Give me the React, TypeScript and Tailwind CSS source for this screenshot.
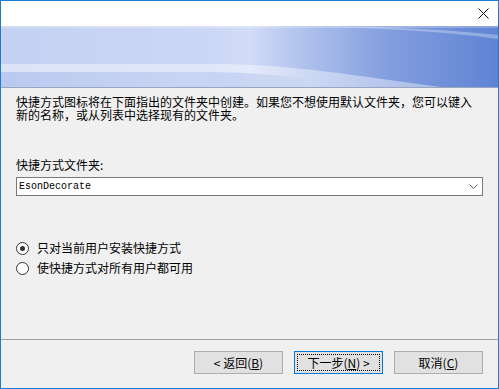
import React from 'react';

function Banner() {
  return (
    <svg width="497" height="61" viewBox="0 0 497 61" className="block">
      <defs>
        <linearGradient id="bn" x1="0" y1="0" x2="1" y2="0">
          <stop offset="0" stopColor="#c4d1f2" />
          <stop offset="0.42" stopColor="#cbd7f5" />
          <stop offset="0.5" stopColor="#d2dcf6" />
          <stop offset="0.6" stopColor="#b2c3ed" />
          <stop offset="0.78" stopColor="#839ede" />
          <stop offset="1" stopColor="#5f83d4" />
        </linearGradient>
        <linearGradient id="low" x1="0" y1="0" x2="1" y2="0">
          <stop offset="0" stopColor="#b6c6ee" />
          <stop offset="0.5" stopColor="#c6d3f3" />
          <stop offset="0.8" stopColor="#98afe6" stopOpacity="0" />
        </linearGradient>
      </defs>
      <rect width="497" height="61" fill="url(#bn)" />
      <rect width="497" height="2" fill="#ffffff" opacity="0.25" />
      <path d="M330 1 C400 3 455 7 497 13 L497 9 C450 4 400 1 330 1 Z" fill="#ffffff" opacity="0.3" />
      <path d="M0 38 L215 38 C290 38 355 50 440 61 L0 61 Z" fill="#ffffff" opacity="0.4" />
      <path d="M0 46 L200 46 C270 46 330 55 390 61 L0 61 Z" fill="url(#low)" opacity="0.9" />
    </svg>
  );
}

function Radio({ checked, label }: { checked?: boolean; label: string }) {
  return (
    <div className="flex items-center h-[16px] gap-[8px]">
      <div className="w-[13px] h-[13px] rounded-full border border-[#333333] bg-white flex items-center justify-center">
        {checked && <div className="w-[5px] h-[5px] rounded-full bg-[#333333]" />}
      </div>
      <span className="leading-[12px]">{label}</span>
    </div>
  );
}

function Btn({ children, primary }: { children: React.ReactNode; primary?: boolean }) {
  return (
    <div
      className={
        'w-[89px] h-[23px] bg-[#e1e1e1] border flex items-center justify-center ' +
        (primary ? 'border-[#0078d7]' : 'border-[#adadad]')
      }
    >
      {primary ? (
        <div className="w-[83px] h-[17px] border border-dotted border-[#000000] flex items-center justify-center leading-[12px]">
          {children}
        </div>
      ) : (
        <span className="leading-[12px]">{children}</span>
      )}
    </div>
  );
}

export default function App() {
  return (
    <div className="w-[499px] h-[389px] border border-[#1a7bd0] bg-[#f0f0f0] flex flex-col overflow-hidden text-[12px] text-black font-['Noto_Sans_CJK_SC',sans-serif]">
      {/* Title bar */}
      <div className="h-[25px] bg-white flex justify-end items-center pr-[9px]">
        <svg width="11" height="11" viewBox="0 0 11 11">
          <path d="M0.5 0.5 L10.5 10.5 M10.5 0.5 L0.5 10.5" stroke="#111" strokeWidth="1" />
        </svg>
      </div>

      {/* Banner */}
      <div className="h-[62px] border-b border-[#9aa5bf]">
        <Banner />
      </div>

      {/* Body */}
      <div className="h-[251px] flex flex-col px-[15px] pt-[8px]">
        <div className="h-[12px] leading-[12px] whitespace-nowrap">
          快捷方式图标将在下面指出的文件夹中创建。如果您不想使用默认文件夹，您可以键入
        </div>
        <div className="mt-[1px] h-[12px] leading-[12px] whitespace-nowrap">新的名称，或从列表中选择现有的文件夹。</div>
        <div className="mt-[38px] leading-[12px]">快捷方式文件夹:</div>
        <div className="mt-[6px] h-[19px] w-[467px] bg-white border border-[#7a7a7a] flex items-center justify-between pl-[2px] pr-[4px]">
          <span className="font-['Liberation_Mono',monospace] text-[10px] leading-[12px]">EsonDecorate</span>
          <svg width="9" height="5" viewBox="0 0 9 5">
            <path d="M0.5 0.5 L4.5 4.5 L8.5 0.5" stroke="#606060" strokeWidth="1" fill="none" />
          </svg>
        </div>
        <div className="mt-[44px] flex flex-col gap-[4px]">
          <Radio checked label="只对当前用户安装快捷方式" />
          <Radio label="使快捷方式对所有用户都可用" />
        </div>
      </div>

      {/* Footer */}
      <div className="flex-1 border-t border-[#a0a0a0] flex justify-end gap-[11px] pr-[15px] pt-[11px]">
        <Btn>
          &lt; 返回(<span className="underline">B</span>)
        </Btn>
        <Btn primary>
          下一步(<span className="underline">N</span>) &gt;
        </Btn>
        <Btn>
          取消(<span className="underline">C</span>)
        </Btn>
      </div>
    </div>
  );
}
